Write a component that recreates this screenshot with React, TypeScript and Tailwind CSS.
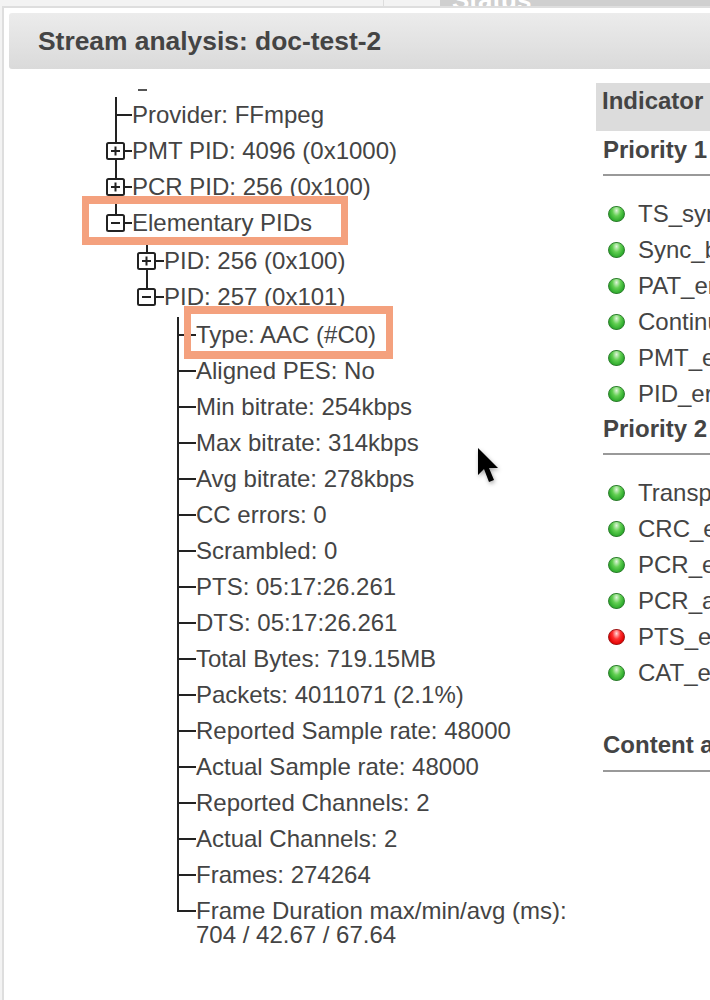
import type { ReactNode } from 'react';

type Kind = 'mid' | 'last' | 'plus' | 'minus' | 'minusEnd';

const ROOT_ROWS: { kind: Kind; label: string }[] = [
  { kind: 'mid', label: 'Provider: FFmpeg' },
  { kind: 'plus', label: 'PMT PID: 4096 (0x1000)' },
  { kind: 'plus', label: 'PCR PID: 256 (0x100)' },
];

const PID_ROWS = [
  'Aligned PES: No',
  'Min bitrate: 254kbps',
  'Max bitrate: 314kbps',
  'Avg bitrate: 278kbps',
  'CC errors: 0',
  'Scrambled: 0',
  'PTS: 05:17:26.261',
  'DTS: 05:17:26.261',
  'Total Bytes: 719.15MB',
  'Packets: 4011071 (2.1%)',
  'Reported Sample rate: 48000',
  'Actual Sample rate: 48000',
  'Reported Channels: 2',
  'Actual Channels: 2',
  'Frames: 274264',
];

const PRIORITY_1 = ['TS_sync_loss', 'Sync_byte_error', 'PAT_error', 'Continuity_count_error', 'PMT_error', 'PID_error'];
const PRIORITY_2 = ['Transport_error', 'CRC_error', 'PCR_error', 'PCR_accuracy_error', 'PTS_error', 'CAT_error'];

function Connector({ kind, width = 32 }: { kind: Kind; width?: number }) {
  const isBox = kind === 'plus' || kind === 'minus' || kind === 'minusEnd';
  const line =
    kind === 'last'
      ? `M16 0V18H${width}`
      : kind === 'mid'
        ? `M16 0V36M16 18H${width}`
        : kind === 'minusEnd'
          ? `M16 0V10M24 18H${width}`
          : `M16 0V36M24 18H${width}`;
  return (
    <svg width={width} height="36" viewBox={`0 0 ${width} 36`} className="shrink-0" fill="none" stroke="#222" strokeWidth="2">
      <path d={line} />
      {isBox && (
        <>
          <rect x="7" y="10" width="17" height="16" rx="1.5" fill="#fff" />
          <path d={kind === 'plus' ? 'M11 18H20M15.5 13.5V22.5' : 'M11 18H20'} />
        </>
      )}
    </svg>
  );
}

function TreeRow({ kind, width, children }: { kind: Kind; width?: number; children: ReactNode }) {
  return (
    <div className="flex h-9 items-center whitespace-nowrap">
      <Connector kind={kind} width={width} />
      {children}
    </div>
  );
}

function Dot({ red }: { red?: boolean }) {
  return (
    <span
      className={
        red
          ? 'h-4 w-[17px] shrink-0 rounded-full border border-[#a01818] bg-[radial-gradient(ellipse_at_50%_25%,#ffd8d8_0%,#ff3030_38%,#e00000_75%,#b80000_100%)]'
          : 'h-4 w-[17px] shrink-0 rounded-full border border-[#2f7f2f] bg-[radial-gradient(ellipse_at_50%_25%,#e0f5da_0%,#62cf52_38%,#2aa82a_75%,#1c8a1c_100%)]'
      }
    />
  );
}

function Rule() {
  return <div className="mt-[6px] ml-[7px] h-[3px] w-[200px] border-b-2 border-[#999]" />;
}

function PriorityBlock({ title, items }: { title: string; items: string[] }) {
  return (
    <div>
      <h3 className="flex h-9 items-center pl-[7px] pt-[2px] font-bold">{title}</h3>
      <Rule />
      <ul className="mt-[20px] -mb-[2px]">
        {items.map((item) => (
          <li key={item} className="flex h-9 items-center whitespace-nowrap pl-[12px]">
            <Dot red={item === 'PTS_error'} />
            <span className="ml-[13px]">{item}</span>
          </li>
        ))}
      </ul>
    </div>
  );
}

export default function App() {
  return (
    <div className="relative h-[1000px] w-[710px] overflow-hidden bg-[#f3f3f3] font-['Liberation_Sans',Arial,sans-serif] text-[24px] leading-6 text-[#444]">
      {/* bit of the page behind the dialog */}
      <div className="flex h-[6px]">
        <div className="w-[384px] border-r border-[#ddd]" />
        <div className="ml-[56px] flex-1 overflow-hidden bg-[#cfcfcf] pl-[12px] text-[26px] font-bold leading-[8px] text-white">
          <span className="relative -top-[4px]">Status</span>
        </div>
      </div>

      <div className="ml-[2px] h-[994px] border-t-2 border-l-2 border-[#dedede] bg-white pt-[5px] pl-[5px]">
        <div className="flex h-[56px] items-center rounded-l-[3px] bg-gradient-to-b from-[#ececec] to-[#dadada] pl-[29px] text-[26.4px] font-bold whitespace-nowrap">
          Stream analysis: doc-test-2
        </div>

        <div className="flex">
          <div className="relative w-[587px] shrink-0 pl-[91px] pt-[28px]">
            <div className="absolute left-[129px] top-[20px] h-[2px] w-[9px] bg-[#555]" />
            {ROOT_ROWS.map((row) => (
              <TreeRow key={row.label} kind={row.kind}>
                {row.label}
              </TreeRow>
            ))}
            <div className="relative">
              <TreeRow kind="minusEnd">Elementary PIDs</TreeRow>
              <div className="absolute -top-[9px] left-[-18px] h-[49px] w-[266px] border-x-[7px] border-y-[8px] border-[#f4a17e]" />
            </div>
            <div className="ml-[31px] mt-[2px]">
              <TreeRow kind="plus" width={33}>
                PID: 256 (0x100)
              </TreeRow>
              <TreeRow kind="minusEnd" width={33}>
                PID: 257 (0x101)
              </TreeRow>
              <div className="ml-[31px]">
                <div className="relative mt-[2px]">
                  <TreeRow kind="mid" width={34}>
                    Type: AAC (#C0)
                  </TreeRow>
                  <div className="absolute -top-[11px] left-[22px] h-[53px] w-[209px] border-x-[7px] border-y-[8px] border-[#f4a17e]" />
                </div>
                {PID_ROWS.map((label) => (
                  <TreeRow key={label} kind="mid" width={34}>
                    {label}
                  </TreeRow>
                ))}
                <div className="flex">
                  <Connector kind="last" width={34} />
                  <div className="pt-[6px] whitespace-nowrap">
                    Frame Duration max/min/avg (ms):
                    <br />
                    704 / 42.67 / 67.64
                  </div>
                </div>
              </div>
            </div>
          </div>

          <div className="flex-1 pt-[14px]">
            <div className="h-[48px] bg-[#dcdcdc] pl-[6px] pt-[6px] font-bold">Indicator</div>
            <PriorityBlock title="Priority 1" items={PRIORITY_1} />
            <PriorityBlock title="Priority 2" items={PRIORITY_2} />
            <h3 className="mt-[38px] flex h-9 items-center pl-[7px] font-bold whitespace-nowrap">Content analysis</h3>
            <Rule />
          </div>
        </div>
      </div>

      {/* mouse pointer */}
      <svg className="absolute left-[472px] top-[444px] drop-shadow-[1px_2px_2px_rgba(0,0,0,0.35)]" width="32" height="46" viewBox="0 0 32 46">
        <path d="M6 4V31L12 25L17 38L22 36L17 24H26Z" fill="#000" />
      </svg>
    </div>
  );
}
